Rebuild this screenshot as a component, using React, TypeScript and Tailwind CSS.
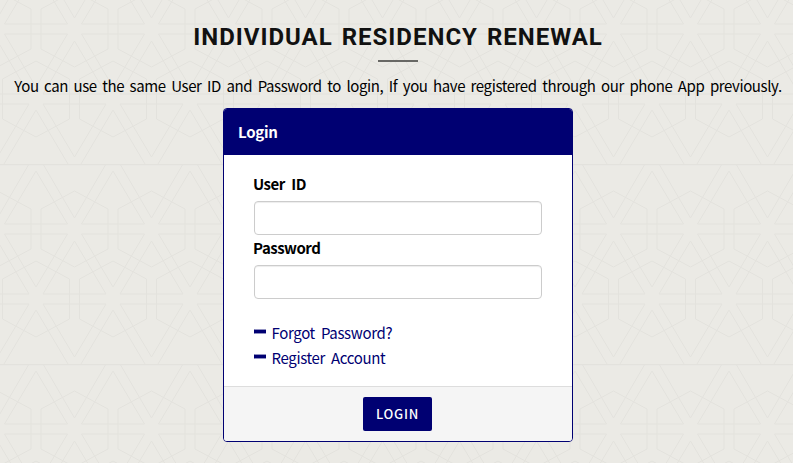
import { Minus } from 'lucide-react'

interface FieldProps {
  id: string
  label: string
  type: string
}

function Field({ id, label, type }: FieldProps) {
  return (
    <div className="h-16">
      <label htmlFor={id} className="-ml-px block h-[30px] pt-px text-[15px] leading-6 font-bold tracking-[-0.5px] text-black [word-spacing:3.5px]">
        <span>{label}</span>
      </label>
      <input
        id={id}
        type={type}
        className="block h-[34px] w-full rounded border border-[#ccc] bg-white px-3 shadow-[inset_0_1px_1px_rgba(0,0,0,0.075)] outline-none"
      />
    </div>
  )
}

// Repeating star and hexagon lattice behind the page
function Lattice() {
  return (
    <svg className="absolute inset-0 h-full w-full" aria-hidden="true">
      <defs>
        <g id="star">
          <path d="M0 -38L33.5 -20V20L0 38L-33.5 20V-20Z" />
          <path d="M7 5H70L38.5 58ZM7 -5H70L38.5 -58Z" />
        </g>
        <pattern id="lattice" width="77" height="200" y="-36" patternUnits="userSpaceOnUse">
          <g fill="none" stroke="#e3e2dd" strokeWidth="1">
            <use href="#star" x="-2.5" y="65" />
            <use href="#star" x="74.5" y="65" />
            <use href="#star" x="-41" y="135" />
            <use href="#star" x="36" y="135" />
            <use href="#star" x="113" y="135" />
            <path d="M36 146L4 200M36 146L68 200M74.5 54L106 0M74.5 54L43 0M-2.5 54L29 0" />
            <path d="M0 .5H77" strokeWidth="1.5" />
          </g>
        </pattern>
      </defs>
      <rect width="100%" height="100%" fill="url(#lattice)" />
    </svg>
  )
}

const links = ['Forgot Password?', 'Register Account']

export default function App() {
  return (
    <div className="relative h-[463px] overflow-hidden bg-[#ebeae5] font-['Noto_Sans_CJK_SC',sans-serif]">
      <Lattice />
      <main className="relative flex flex-col items-center pl-[3px]">
        <h1 className="mt-[21px] h-8 text-2xl leading-8 font-bold tracking-[1px] whitespace-nowrap text-[#111] [word-spacing:2px] font-['Roboto',sans-serif]">
          INDIVIDUAL RESIDENCY RENEWAL
        </h1>
        <div className="mt-[7px] h-0.5 w-10 bg-[#686865]" />
        <p className="mt-3 h-[34px] text-[15px] leading-6 tracking-[-0.4px] whitespace-nowrap text-black [word-spacing:2.55px]">
          You can use the same User ID and Password to login, If you have registered through our phone App previously.
        </p>

        <section className="flex h-[334px] w-[350px] flex-col overflow-hidden rounded border border-[#000072] bg-white">
          <header className="flex h-[46px] shrink-0 items-center bg-[#000072] px-[14px] pt-px text-[15px] font-bold tracking-[-0.3px] text-white">
            <span>Login</span>
          </header>
          <form className="flex-1 px-[30px] pt-4">
            <Field id="user" label="User ID" type="text" />
            <Field id="password" label="Password" type="password" />
            <ul className="mt-[21px]">
              {links.map((link) => (
                <li key={link} className="flex h-[25px] items-center">
                  <Minus className="-mt-0.5 h-[13px] w-[12px] text-[#000072]" viewBox="5 5 14 14" strokeWidth={4.5} strokeLinecap="butt" />
                  <a href="#" className="ml-[5.5px] text-[15px] leading-6 tracking-[-0.35px] whitespace-nowrap text-[#000072] [word-spacing:3px]">{link}</a>
                </li>
              ))}
            </ul>
          </form>
          <footer className="flex h-[55px] shrink-0 items-center justify-center border-t border-[#ddd] bg-[#f5f5f5]">
            <button type="button" className="mr-px h-[34px] w-[69px] rounded-[2px] bg-[#000072] pb-px text-[13px] font-medium tracking-[0.7px] text-white">
              LOGIN
            </button>
          </footer>
        </section>
      </main>
    </div>
  )
}
